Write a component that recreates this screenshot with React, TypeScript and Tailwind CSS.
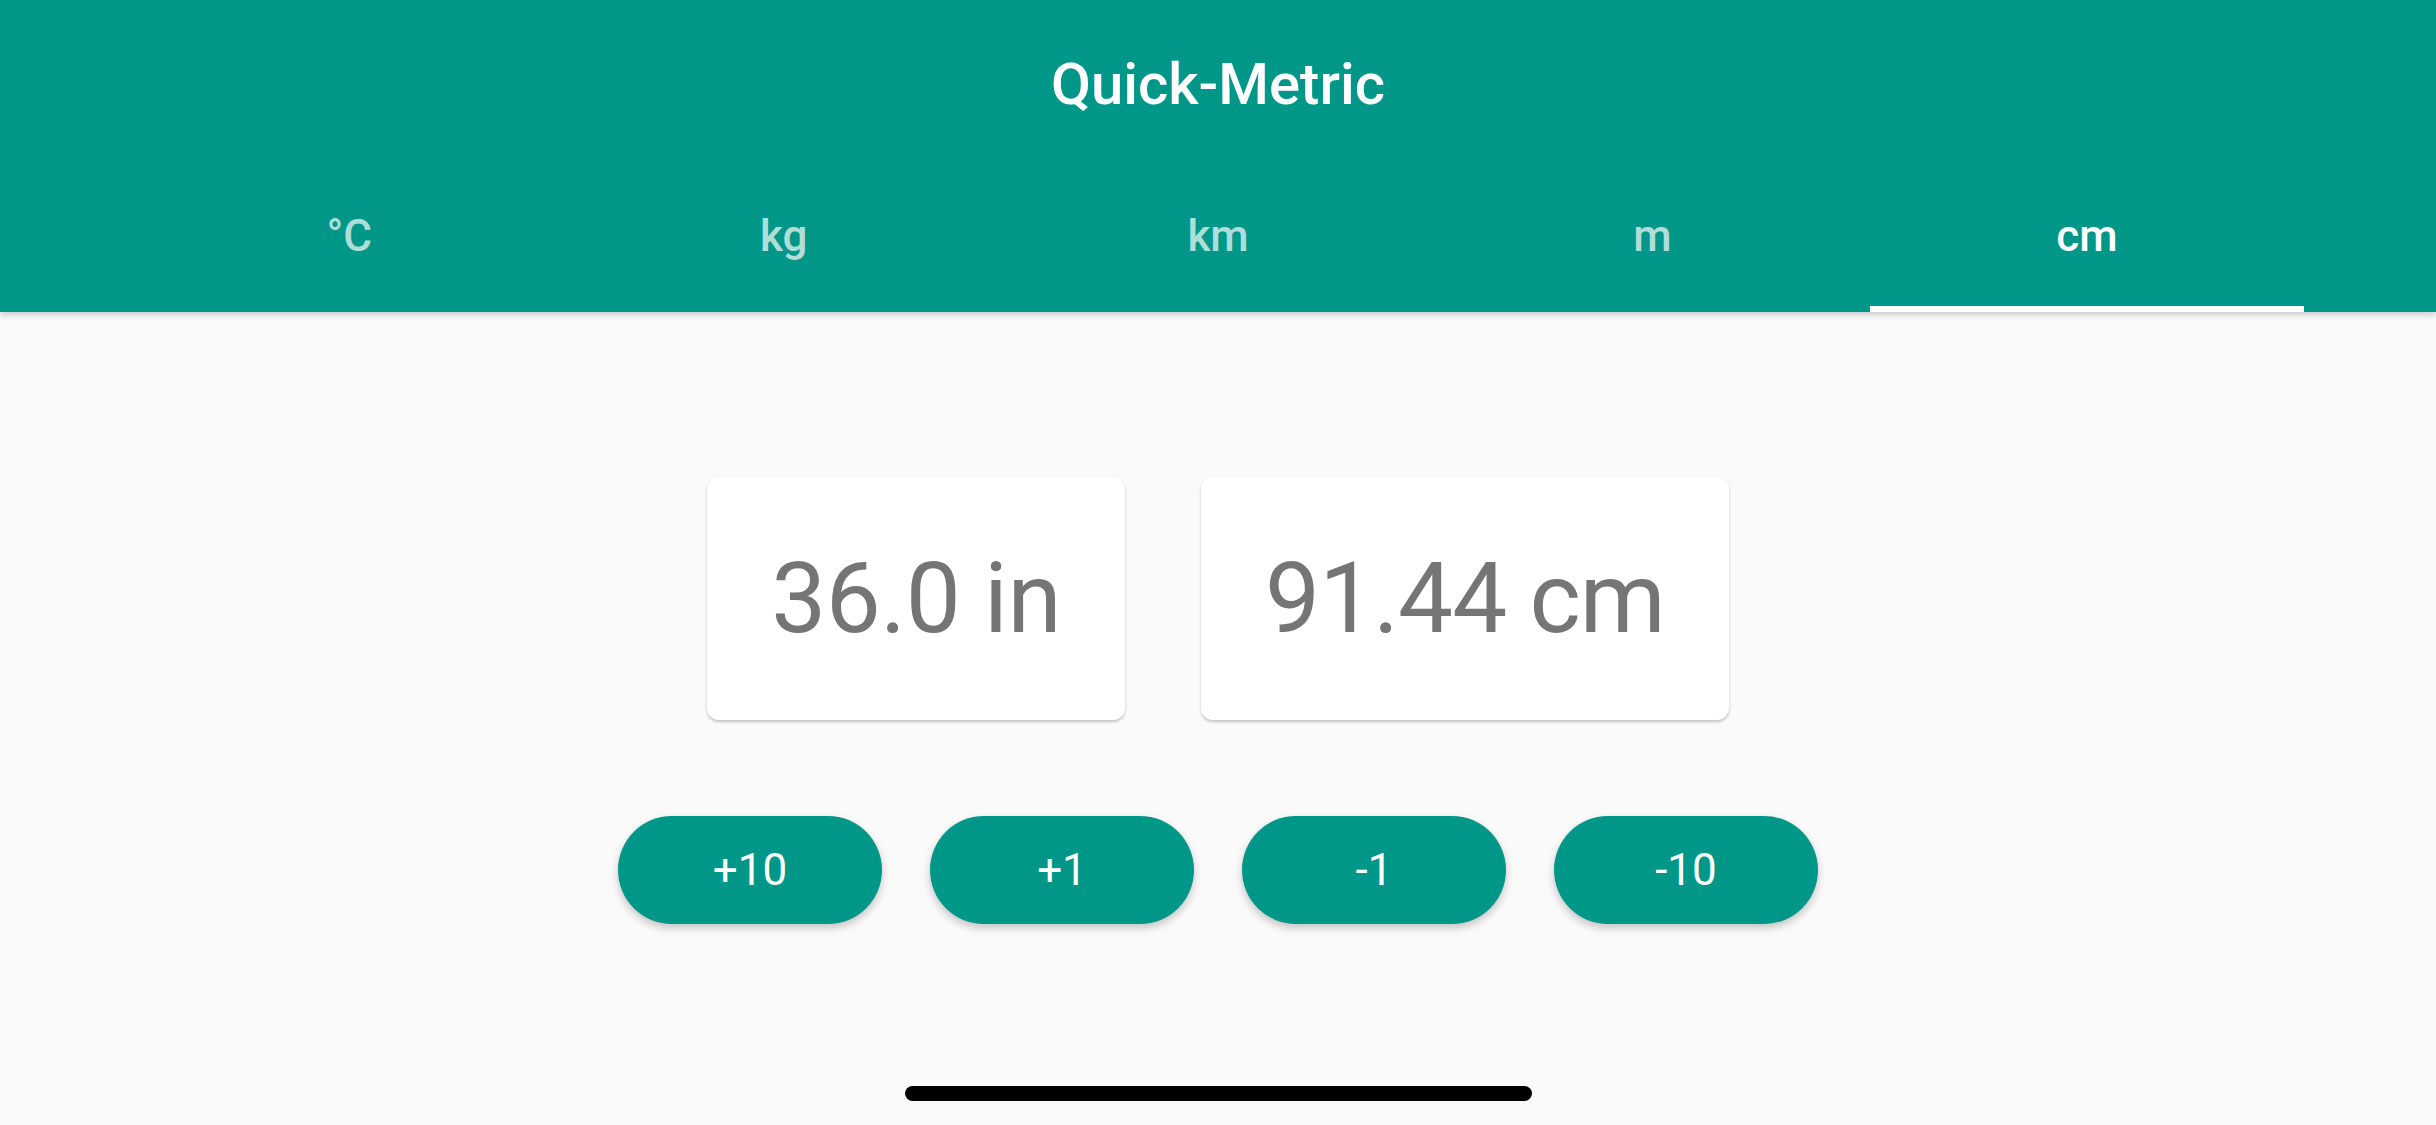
const units = ['°C', 'kg', 'km', 'm', 'cm']
const steps = ['+10', '+1', '-1', '-10']

export default function App() {
  const active = 4

  return (
    <div className="flex h-[1125px] w-full flex-col bg-[#fafafa] font-['Roboto',sans-serif]">
      {/* App bar with title and unit tabs */}
      <header className="relative z-10 flex h-[312px] flex-col bg-[#009688] shadow-[0_3px_6px_rgba(0,0,0,0.18)]">
        <div className="flex h-[168px] items-center justify-center">
          <h1 className="text-[58px] font-medium leading-none text-white">Quick-Metric</h1>
        </div>
        <nav className="flex h-[144px] px-[132px]">
          {units.map((u, i) => (
            <div key={u} className="relative flex flex-1 items-center justify-center pb-2">
              <span
                className={
                  i === active
                    ? 'text-[44px] font-medium leading-none text-white'
                    : 'text-[44px] font-medium leading-none text-white/70'
                }
              >
                {u}
              </span>
              {i === active && <span className="absolute bottom-0 left-0 right-0 h-[6px] bg-white" />}
            </div>
          ))}
        </nav>
      </header>

      {/* Value cards */}
      <main className="flex flex-1 flex-col items-center pt-[165px]">
        <div className="flex gap-[76px]">
          <div className="flex h-[243px] items-center rounded-xl bg-white px-16 shadow-[0_2px_3px_rgba(0,0,0,0.22)]">
            <span className="text-[98px] leading-none tracking-[-0.5px] text-[#757575]">36.0 in</span>
          </div>
          <div className="flex h-[243px] items-center rounded-xl bg-white px-16 shadow-[0_2px_3px_rgba(0,0,0,0.22)]">
            <span className="text-[98px] leading-none tracking-[-1px] text-[#757575]">91.44 cm</span>
          </div>
        </div>

        {/* Step buttons */}
        <div className="mt-[96px] flex gap-[48px]">
          {steps.map((s) => (
            <button
              key={s}
              className="flex h-[108px] w-[264px] items-center justify-center rounded-full bg-[#009688] text-[44px] leading-none text-white shadow-[0_4px_8px_rgba(0,0,0,0.22)]"
            >
              {s}
            </button>
          ))}
        </div>

        <div className="mt-auto mb-[24px] h-[15px] w-[627px] rounded-full bg-black" />
      </main>
    </div>
  )
}
